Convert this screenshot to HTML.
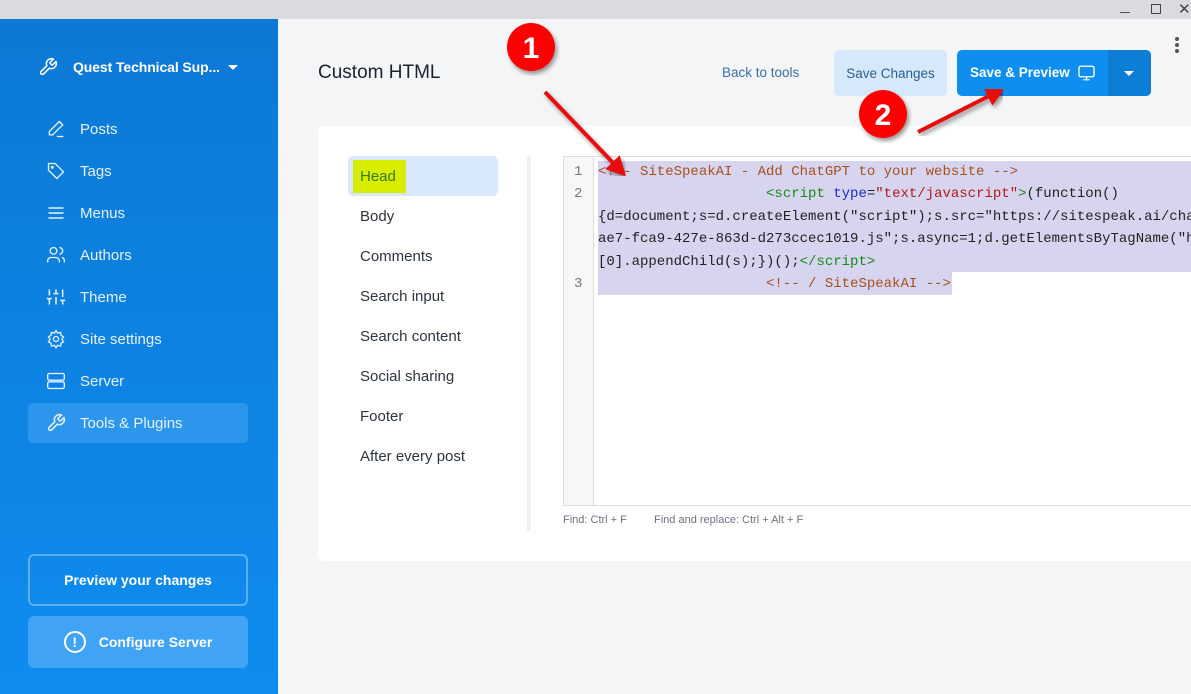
<!DOCTYPE html>
<html><head><meta charset="utf-8"><style>
*{margin:0;padding:0;box-sizing:border-box}
body{width:1191px;height:694px;overflow:hidden;font-family:"Liberation Sans",sans-serif;background:#f4f5f7;position:relative}
.tb{position:absolute;left:0;top:0;width:1191px;height:19px;background:#dadbdf}
.sb{position:absolute;left:0;top:19px;width:278px;height:675px;background:linear-gradient(#0c79d4,#0f8cf0)}
.t{position:absolute;white-space:nowrap}
.nav{position:absolute;left:46px;color:#e6f1fc;font-size:15px;white-space:nowrap;width:200px}
.nav svg{position:absolute;left:0;top:-2px}
.nav span{position:absolute;left:34px;top:0;white-space:nowrap}
.mono{font-family:"Liberation Mono",monospace;font-size:14px;position:absolute;white-space:pre;left:598px}
.menu{position:absolute;left:360px;font-size:15px;color:#2c3440;white-space:nowrap}
.btn{position:absolute;display:flex;align-items:center;justify-content:center}
</style></head><body>
<div class="tb"></div>
<div class="t" style="left:1120px;top:12px;width:10px;height:1px;background:#555"></div>
<div class="t" style="left:1151px;top:4px;width:10px;height:10px;border:1px solid #444"></div>
<div class="t" style="left:1178px;top:0px;font-size:15px;color:#444">✕</div>
<div class="sb"></div>
<svg class="t" style="left:38px;top:57px" width="20" height="20" viewBox="0 0 24 24" fill="none" stroke="#fff" stroke-width="1.8" stroke-linecap="round" stroke-linejoin="round"><path d="M14.7 6.3a1 1 0 000 1.4l1.6 1.6a1 1 0 001.4 0l3.8-3.8a6 6 0 01-7.9 7.9l-6.9 6.9a2.1 2.1 0 01-3-3l6.9-6.9a6 6 0 017.9-7.9z"/></svg>
<div class="t" style="left:73px;top:59px;color:#fff;font-size:14px;font-weight:bold;letter-spacing:-0.1px">Quest Technical Sup...</div>
<div class="t" style="left:228px;top:65px;border-left:5px solid transparent;border-right:5px solid transparent;border-top:5px solid #fff"></div>
<div style="position:absolute;left:28px;top:403px;width:220px;height:40px;background:#2b96ec;border-radius:5px"></div>
<div class="nav" style="top:121px"><svg width="20" height="20" viewBox="0 0 24 24" fill="none" stroke="#e6f1fc" stroke-width="1.6"><path d="M16 3l4 4L8 19H4v-4z"/><path d="M13 21h8"/></svg><span>Posts</span></div>
<div class="nav" style="top:163px"><svg width="20" height="20" viewBox="0 0 24 24" fill="none" stroke="#e6f1fc" stroke-width="1.6"><path d="M3 3h8l10 10-8 8L3 11z"/><circle cx="7.5" cy="7.5" r="1"/></svg><span>Tags</span></div>
<div class="nav" style="top:205px"><svg width="20" height="20" viewBox="0 0 24 24" fill="none" stroke="#e6f1fc" stroke-width="1.8"><path d="M3 6h18M3 12h18M3 18h18"/></svg><span>Menus</span></div>
<div class="nav" style="top:247px"><svg width="20" height="20" viewBox="0 0 24 24" fill="none" stroke="#e6f1fc" stroke-width="1.6"><circle cx="9" cy="7" r="4"/><path d="M2 21v-2a4 4 0 014-4h6a4 4 0 014 4v2M16 3a4 4 0 010 8M22 21v-2a4 4 0 00-3-4"/></svg><span>Authors</span></div>
<div class="nav" style="top:289px"><svg width="20" height="20" viewBox="0 0 24 24" fill="none" stroke="#e6f1fc" stroke-width="1.8"><path d="M4 21v-7M4 10V3M12 21v-9M12 8V3M20 21v-5M20 12V3M1 14h6M9 8h6M17 16h6"/></svg><span>Theme</span></div>
<div class="nav" style="top:331px"><svg width="20" height="20" viewBox="0 0 24 24" fill="none" stroke="#e6f1fc" stroke-width="1.6"><circle cx="12" cy="12" r="3"/><path d="M12 2l2 3 3.5-1 .5 3.5 3 2-2 3 2 3-3 1.5-.5 3.5-3.5-1-2 3-2-3-3.5 1-.5-3.5-3-1.5 2-3-2-3 3-2 .5-3.5 3.5 1z"/></svg><span>Site settings</span></div>
<div class="nav" style="top:373px"><svg width="20" height="20" viewBox="0 0 24 24" fill="none" stroke="#e6f1fc" stroke-width="1.6"><rect x="2" y="3" width="20" height="8" rx="2"/><rect x="2" y="13" width="20" height="8" rx="2"/></svg><span>Server</span></div>
<div class="nav" style="top:415px"><svg width="20" height="20" viewBox="0 0 24 24" fill="none" stroke="#e6f1fc" stroke-width="1.8"><path d="M14.7 6.3a1 1 0 000 1.4l1.6 1.6a1 1 0 001.4 0l3.8-3.8a6 6 0 01-7.9 7.9l-6.9 6.9a2.1 2.1 0 01-3-3l6.9-6.9a6 6 0 017.9-7.9z"/></svg><span>Tools &amp; Plugins</span></div>
<div class="btn" style="left:28px;top:554px;width:220px;height:52px;border:2px solid #5eaff0;border-radius:6px;color:#fff;font-weight:bold;font-size:14px">Preview your changes</div>
<div class="btn" style="left:28px;top:616px;width:220px;height:52px;background:#40a3f5;border-radius:6px;color:#fff;font-weight:bold;font-size:14px"><span style="display:inline-block;width:22px;height:22px;border:2px solid #fff;border-radius:50%;text-align:center;line-height:18px;margin-right:13px">!</span>Configure Server</div>

<div class="t" style="left:318px;top:62px;font-size:19px;color:#1a2230">Custom HTML</div>
<div class="t" style="left:722px;top:65px;font-size:13.5px;color:#3b6ea8">Back to tools</div>
<div class="btn" style="left:834px;top:50px;width:113px;height:46px;background:#d6e9fb;border-radius:5px;color:#2c5c94;font-size:13.5px">Save Changes</div>
<div style="position:absolute;left:957px;top:50px;width:194px;height:46px;background:#0e8ef0;border-radius:5px;overflow:hidden"><div style="position:absolute;right:0;top:0;width:43px;height:46px;background:#0c7ed6"></div><div class="t" style="left:13px;top:15px;color:#fff;font-weight:bold;font-size:13.5px">Save &amp; Preview</div><svg class="t" style="left:120px;top:14px" width="19" height="18" viewBox="0 0 24 24" fill="none" stroke="#fff" stroke-width="1.8"><rect x="2" y="3" width="20" height="14" rx="2"/><path d="M8 21h8M12 17v4"/></svg><div class="t" style="left:167px;top:21px;border-left:5px solid transparent;border-right:5px solid transparent;border-top:5px solid #fff"></div></div>
<div class="t" style="left:1175px;top:37px;width:4px;height:4px;border-radius:2px;background:#555;box-shadow:0 6px 0 #555,0 12px 0 #555"></div>

<div style="position:absolute;left:318px;top:126px;width:880px;height:435px;background:#fff;border-radius:6px"></div>
<div style="position:absolute;left:348px;top:156px;width:150px;height:40px;background:#d8e9fb;border-radius:5px"></div>
<div style="position:absolute;left:353px;top:160px;width:53px;height:33px;background:#d6ec00"></div>
<div class="menu" style="top:168px;color:#3a7a10">Head</div>
<div class="menu" style="top:208px">Body</div>
<div class="menu" style="top:248px">Comments</div>
<div class="menu" style="top:288px">Search input</div>
<div class="menu" style="top:328px">Search content</div>
<div class="menu" style="top:368px">Social sharing</div>
<div class="menu" style="top:408px">Footer</div>
<div class="menu" style="top:448px">After every post</div>
<div style="position:absolute;left:527px;top:156px;width:4px;height:375px;background:#f0f1f3"></div>

<div style="position:absolute;left:563px;top:156px;width:640px;height:350px;border:1px solid #ddd;background:#fff"></div>
<div style="position:absolute;left:564px;top:157px;width:30px;height:348px;background:#f7f7f7;border-right:1px solid #ddd"></div>
<div style="position:absolute;left:598px;top:161px;width:600px;height:111px;background:#d7d4f0"></div>
<div style="position:absolute;left:598px;top:272px;width:354px;height:23px;background:#d7d4f0"></div>
<div class="mono" style="left:574px;top:161px;color:#777;line-height:22.4px">1
2



3</div>
<div class="mono" style="top:161px;line-height:22.4px;color:#222"><span style="color:#a5511c">&lt;!-- SiteSpeakAI - Add ChatGPT to your website --&gt;</span>
                    <span style="color:#178a17">&lt;script</span> <span style="color:#1a2ec0">type</span>=<span style="color:#b01a1a">"text/javascript"</span><span style="color:#178a17">&gt;</span>(function()
{d=document;s=d.createElement("script");s.src="https://sitespeak.ai/cha
ae7-fca9-427e-863d-d273ccec1019.js";s.async=1;d.getElementsByTagName("h
[0].appendChild(s);})();<span style="color:#178a17">&lt;/script&gt;</span>
                    <span style="color:#a5511c">&lt;!-- / SiteSpeakAI --&gt;</span></div>
<div class="t" style="left:563px;top:514px;font-size:11px;color:#6a7380">Find: Ctrl + F</div>
<div class="t" style="left:654px;top:514px;font-size:11px;color:#6a7380">Find and replace: Ctrl + Alt + F</div>

<svg class="t" style="left:0;top:0" width="1191" height="694">
<defs><marker id="ah" markerWidth="5" markerHeight="5" refX="2" refY="2.5" orient="auto"><path d="M0 0L5 2.5L0 5z" fill="#e81010"/></marker>
<filter id="sh"><feDropShadow dx="2" dy="3" stdDeviation="2" flood-opacity="0.4"/></filter></defs>
<line x1="545" y1="92" x2="618" y2="168" stroke="#e81010" stroke-width="4" marker-end="url(#ah)" filter="url(#sh)"/>
<line x1="918" y1="132" x2="995" y2="93" stroke="#e81010" stroke-width="4" marker-end="url(#ah)" filter="url(#sh)"/>
<circle cx="531" cy="47" r="24" fill="#f00" filter="url(#sh)"/>
<text x="531" y="58" text-anchor="middle" font-family="Liberation Sans" font-weight="bold" font-size="30" fill="#fff">1</text>
<circle cx="883" cy="114" r="24" fill="#f00" filter="url(#sh)"/>
<text x="883" y="125" text-anchor="middle" font-family="Liberation Sans" font-weight="bold" font-size="30" fill="#fff">2</text>
</svg>
</body></html>
